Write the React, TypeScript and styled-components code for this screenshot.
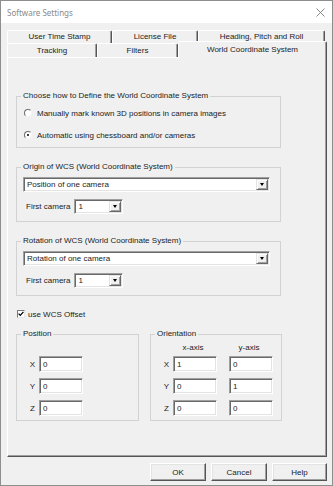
import React from "react";
import styled, { createGlobalStyle } from "styled-components";

const GlobalStyle = createGlobalStyle`
  html, body { margin: 0; padding: 0; background: #f0f0f0; }
  body { font-family: "Liberation Sans", Arial, sans-serif; font-size: 8px; color: #1c1c1c; }
`;

const Window = styled.div`
  width: 333px;
  height: 486px;
  box-sizing: border-box;
  border: 1px solid #8e8e8e;
  background: #f0f0f0;
  display: flex;
  flex-direction: column;
`;

const TitleBar = styled.div`
  height: 22px;
  background: #fff;
  display: flex;
  align-items: center;
  justify-content: space-between;
  padding: 0 7px 0 6px;
  font-family: "Noto Sans", sans-serif;
  font-size: 8px;
  color: #8a8a8a;
`;

const Body = styled.div`
  padding: 7px 5px 0 6px;
  display: flex;
  flex-direction: column;
`;

const TabRow = styled.div<{ $h: number }>`
  display: flex;
  height: ${(p) => p.$h}px;
  align-items: flex-end;
`;

const Tab = styled.div<{ $w: number; $h: number; $active?: boolean }>`
  box-sizing: border-box;
  width: ${(p) => p.$w}px;
  height: ${(p) => p.$h}px;
  border-top: 1px solid #fff;
  border-left: 1px solid #fff;
  border-right: 1px solid #555;
  box-shadow: inset -1px 0 #a0a0a0;
  border-radius: 2px 2px 0 0;
  background: #f0f0f0;
  display: flex;
  align-items: center;
  justify-content: center;
  padding-bottom: ${(p) => (p.$active ? 2 : 1)}px;
  position: ${(p) => (p.$active ? "relative" : "static")};
  z-index: ${(p) => (p.$active ? 2 : 0)};
  margin-bottom: ${(p) => (p.$active ? -1 : 0)}px;
`;

const Panel = styled.div`
  box-sizing: border-box;
  width: 320px;
  height: 400px;
  border-top: 1px solid #fff;
  border-left: 1px solid #fff;
  border-right: 1px solid #555;
  border-bottom: 1px solid #555;
  box-shadow: inset -1px -1px #a0a0a0;
  padding: 33px 0 0 8px;
  display: flex;
  flex-direction: column;
`;

const Group = styled.fieldset<{ $w: number; $mt?: number }>`
  box-sizing: border-box;
  width: ${(p) => p.$w}px;
  margin: ${(p) => p.$mt ?? 0}px 0 0 0;
  padding: 0 4px 0 4px;
  border: 1px solid #d2d2d2;
  min-width: 0;
`;

const Legend = styled.legend`
  padding: 0 2px;
  margin: 0;
  line-height: 10px;
  font-size: 8px;
`;

const RadioList = styled.div`
  display: flex;
  flex-direction: column;
  gap: 10px;
  padding: 6px 0 6px 3px;
`;

const OptionRow = styled.label`
  display: flex;
  align-items: center;
  height: 12px;
  gap: 5px;
`;

const Radio = styled.span<{ $on?: boolean }>`
  box-sizing: border-box;
  width: 8px;
  height: 8px;
  border-radius: 50%;
  border: 1px solid;
  border-color: #6e6e6e #f4f4f4 #f4f4f4 #6e6e6e;
  background: #fff;
  display: flex;
  align-items: center;
  justify-content: center;
  &::after {
    content: "";
    width: 2px;
    height: 2px;
    border-radius: 50%;
    background: ${(p) => (p.$on ? "#000" : "transparent")};
  }
`;

const ComboStack = styled.div`
  display: flex;
  flex-direction: column;
  gap: 7px;
  padding: 5px 0 7px 2px;
`;

const Combo = styled.div<{ $w: number }>`
  box-sizing: border-box;
  width: ${(p) => p.$w}px;
  height: 15px;
  background: #fff;
  border-top: 1px solid #a0a0a0;
  border-left: 1px solid #a0a0a0;
  border-right: 1px solid #fff;
  border-bottom: 1px solid #fff;
  box-shadow: inset 1px 1px #696969, inset -1px -1px #e3e3e3;
  display: flex;
  align-items: center;
  padding-left: 3px;
`;

const ComboText = styled.span`
  flex: 1;
`;

const DropButton = styled.span`
  box-sizing: border-box;
  width: 12px;
  height: 11px;
  margin-right: 1px;
  background: #f0f0f0;
  border-top: 1px solid #e3e3e3;
  border-left: 1px solid #e3e3e3;
  border-right: 1px solid #696969;
  border-bottom: 1px solid #696969;
  box-shadow: inset 1px 1px #fff, inset -1px -1px #a0a0a0;
  display: flex;
  align-items: center;
  justify-content: center;
  &::after {
    content: "";
    border-left: 2.5px solid transparent;
    border-right: 2.5px solid transparent;
    border-top: 3px solid #000;
  }
`;

const CameraRow = styled.div`
  display: flex;
  align-items: center;
  gap: 4px;
  padding-left: 3px;
`;

const CheckRow = styled.label`
  display: flex;
  align-items: center;
  height: 12px;
  gap: 3px;
  margin: 12px 0 0 1px;
`;

const CheckBox = styled.span`
  box-sizing: border-box;
  width: 8px;
  height: 8px;
  background: #fff;
  border-top: 1px solid #7a7a7a;
  border-left: 1px solid #7a7a7a;
  border-right: 1px solid #e8e8e8;
  border-bottom: 1px solid #e8e8e8;
  display: flex;
  align-items: center;
  justify-content: center;
`;

const OffsetRow = styled.div`
  display: flex;
  gap: 11px;
  margin-top: 9px;
`;

const FieldGrid = styled.div<{ $cols: string; $pt: number }>`
  display: grid;
  grid-template-columns: ${(p) => p.$cols};
  row-gap: 6px;
  align-items: center;
  padding: ${(p) => p.$pt}px 0 4px 0;
`;

const AxisLabel = styled.span`
  text-align: right;
  padding-right: 4px;
`;

const AxisHead = styled.span`
  width: 44px;
  text-align: center;
  line-height: 11px;
  margin-bottom: -3px;
  margin-left: -2px;
`;

const TextBox = styled.div`
  box-sizing: border-box;
  width: 44px;
  height: 16px;
  background: #fff;
  border-top: 1px solid #a0a0a0;
  border-left: 1px solid #a0a0a0;
  border-right: 1px solid #fff;
  border-bottom: 1px solid #fff;
  box-shadow: inset 1px 1px #696969, inset -1px -1px #e3e3e3;
  display: flex;
  align-items: center;
  padding-left: 3px;
`;

const Footer = styled.div`
  display: flex;
  justify-content: flex-end;
  gap: 5px;
  margin-top: 6px;
`;

const Button = styled.button<{ $w: number }>`
  box-sizing: border-box;
  width: ${(p) => p.$w}px;
  height: 18px;
  padding: 0;
  font-family: "Liberation Sans", Arial, sans-serif;
  font-size: 8px;
  color: #1c1c1c;
  background: #f0f0f0;
  border-top: 1px solid #fff;
  border-left: 1px solid #fff;
  border-right: 1px solid #555;
  border-bottom: 1px solid #555;
  box-shadow: inset -1px -1px #a0a0a0, inset 1px 1px #e3e3e3;
`;

const Close = () => (
  <svg width="9" height="9" viewBox="0 0 9 9">
    <path d="M0.5 0.5 L8.5 8.5 M8.5 0.5 L0.5 8.5" stroke="#7a7a7a" strokeWidth="0.9" fill="none" />
  </svg>
);

const Check = () => (
  <svg width="6" height="6" viewBox="0 0 6 6">
    <path d="M0.6 2.6 L2.3 4.4 L5.4 0.9" stroke="#000" strokeWidth="1.3" fill="none" />
  </svg>
);

const ComboBox = ({ w, value }: { w: number; value: string }) => (
  <Combo $w={w}>
    <ComboText>{value}</ComboText>
    <DropButton />
  </Combo>
);

const rowOne = [
  { label: "User Time Stamp", w: 105 },
  { label: "License File", w: 86 },
  { label: "Heading, Pitch and Roll", w: 127 },
];

const rowTwo = [
  { label: "Tracking", w: 90 },
  { label: "Filters", w: 81 },
  { label: "World Coordinate System", w: 149, active: true },
];

const position = [
  ["X", "0"],
  ["Y", "0"],
  ["Z", "0"],
];

const orientation = [
  ["X", "1", "0"],
  ["Y", "0", "1"],
  ["Z", "0", "0"],
];

export default function App() {
  return (
    <>
      <GlobalStyle />
      <Window>
        <TitleBar>
          <span>Software Settings</span>
          <Close />
        </TitleBar>
        <Body>
          <TabRow $h={13}>
            {rowOne.map((t) => (
              <Tab key={t.label} $w={t.w} $h={13}>
                {t.label}
              </Tab>
            ))}
          </TabRow>
          <TabRow $h={14}>
            {rowTwo.map((t) => (
              <Tab key={t.label} $w={t.w} $h={t.active ? 17 : 14} $active={t.active}>
                {t.label}
              </Tab>
            ))}
          </TabRow>
          <Panel>
            <Group $w={265}>
              <Legend>Choose how to Define the World Coordinate System</Legend>
              <RadioList>
                <OptionRow>
                  <Radio />
                  Manually mark known 3D positions in camera images
                </OptionRow>
                <OptionRow>
                  <Radio $on />
                  Automatic using chessboard and/or cameras
                </OptionRow>
              </RadioList>
            </Group>

            <Group $w={265} $mt={14}>
              <Legend>Origin of WCS (World Coordinate System)</Legend>
              <ComboStack>
                <ComboBox w={247} value="Position of one camera" />
                <CameraRow>
                  First camera
                  <ComboBox w={49} value="1" />
                </CameraRow>
              </ComboStack>
            </Group>

            <Group $w={265} $mt={14}>
              <Legend>Rotation of WCS (World Coordinate System)</Legend>
              <ComboStack>
                <ComboBox w={247} value="Rotation of one camera" />
                <CameraRow>
                  First camera
                  <ComboBox w={49} value="1" />
                </CameraRow>
              </ComboStack>
            </Group>

            <CheckRow>
              <CheckBox>
                <Check />
              </CheckBox>
              use WCS Offset
            </CheckRow>

            <OffsetRow>
              <Group $w={123}>
                <Legend>Position</Legend>
                <FieldGrid $cols="18px 44px" $pt={17}>
                  {position.map(([axis, v]) => (
                    <React.Fragment key={axis}>
                      <AxisLabel>{axis}</AxisLabel>
                      <TextBox>{v}</TextBox>
                    </React.Fragment>
                  ))}
                </FieldGrid>
              </Group>
              <Group $w={132}>
                <Legend>Orientation</Legend>
                <FieldGrid $cols="18px 56px 44px" $pt={3}>
                  <span />
                  <AxisHead>x-axis</AxisHead>
                  <AxisHead>y-axis</AxisHead>
                  {orientation.map(([axis, a, b]) => (
                    <React.Fragment key={axis}>
                      <AxisLabel>{axis}</AxisLabel>
                      <TextBox>{a}</TextBox>
                      <TextBox>{b}</TextBox>
                    </React.Fragment>
                  ))}
                </FieldGrid>
              </Group>
            </OffsetRow>
          </Panel>
          <Footer>
            <Button $w={56}>OK</Button>
            <Button $w={56}>Cancel</Button>
            <Button $w={55}>Help</Button>
          </Footer>
        </Body>
      </Window>
    </>
  );
}
